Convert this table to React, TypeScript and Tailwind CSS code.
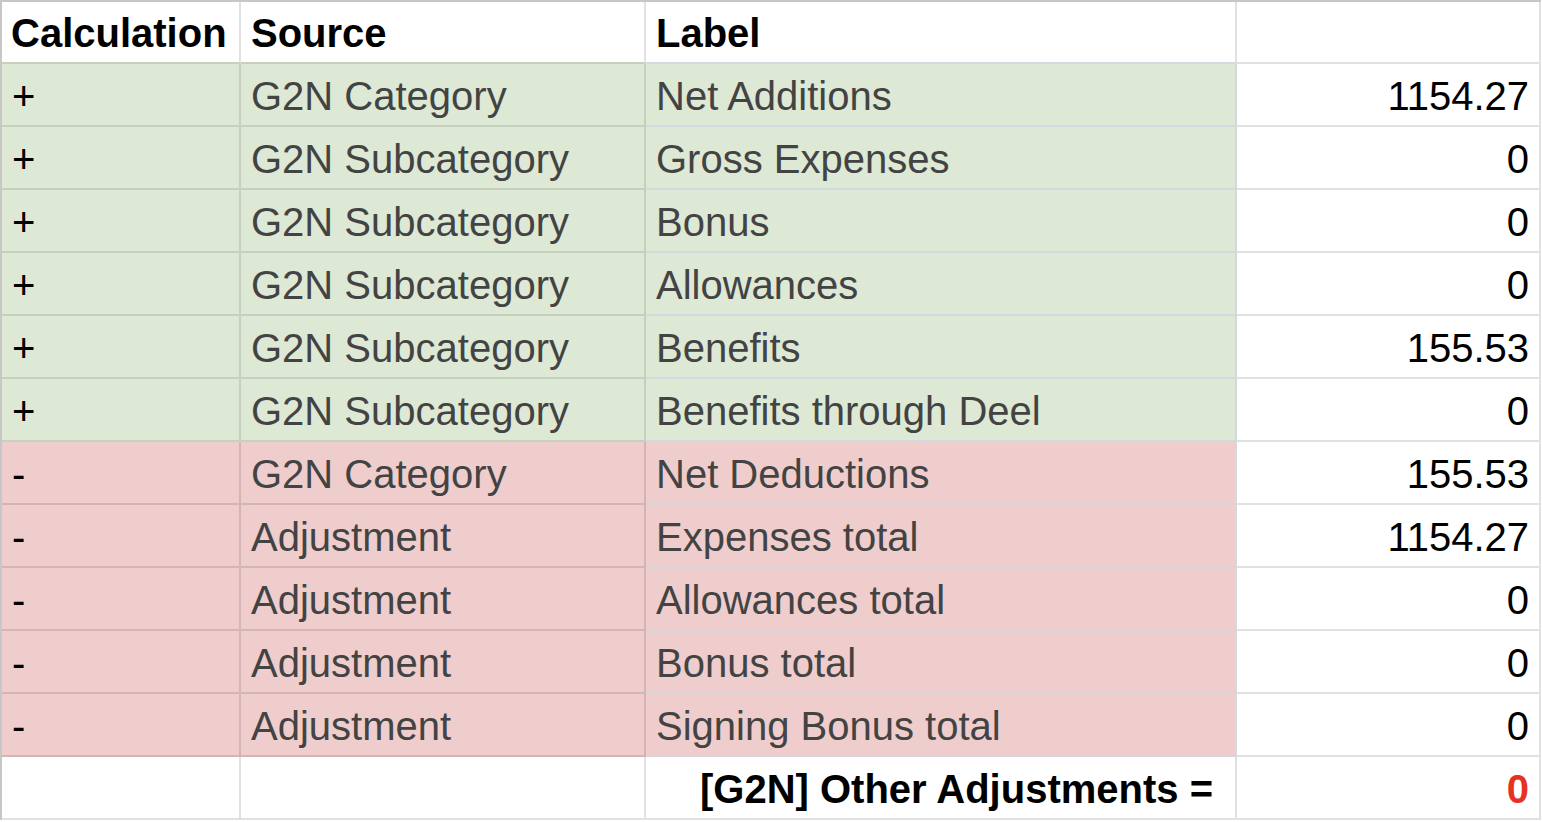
import React from "react";

type Row = { calc: string; source: string; label: string; value: string; kind: "g" | "r" };

const rows: Row[] = [
  { calc: "+", source: "G2N Category", label: "Net Additions", value: "1154.27", kind: "g" },
  { calc: "+", source: "G2N Subcategory", label: "Gross Expenses", value: "0", kind: "g" },
  { calc: "+", source: "G2N Subcategory", label: "Bonus", value: "0", kind: "g" },
  { calc: "+", source: "G2N Subcategory", label: "Allowances", value: "0", kind: "g" },
  { calc: "+", source: "G2N Subcategory", label: "Benefits", value: "155.53", kind: "g" },
  { calc: "+", source: "G2N Subcategory", label: "Benefits through Deel", value: "0", kind: "g" },
  { calc: "-", source: "G2N Category", label: "Net Deductions", value: "155.53", kind: "r" },
  { calc: "-", source: "Adjustment", label: "Expenses total", value: "1154.27", kind: "r" },
  { calc: "-", source: "Adjustment", label: "Allowances total", value: "0", kind: "r" },
  { calc: "-", source: "Adjustment", label: "Bonus total", value: "0", kind: "r" },
  { calc: "-", source: "Adjustment", label: "Signing Bonus total", value: "0", kind: "r" },
];

const base =
  "flex items-center border-r-2 border-b-2 text-[40px] leading-none whitespace-nowrap overflow-hidden";

export default function App() {
  return (
    <div
      className="w-[1542px] h-[822px] bg-white"
      style={{ fontFamily: '"Liberation Sans", Arial, sans-serif' }}
    >
      <div className="grid grid-cols-[239px_405px_591px_304px] border-l-2 border-t-2 border-[#c7c7c7] w-[1541px]">
        {/* header */}
        <div className={`${base} h-[62px] pt-[2px] pl-[9px] font-bold text-black bg-white border-[#e1e1e1] border-b-[#c6d0be]`}>
          Calculation
        </div>
        <div className={`${base} h-[62px] pt-[2px] pl-[10px] font-bold text-black bg-white border-[#e1e1e1] border-b-[#c6d0be]`}>
          Source
        </div>
        <div className={`${base} h-[62px] pt-[2px] pl-[10px] font-bold text-black bg-white border-[#e1e1e1] border-b-[#d3dae0]`}>
          Label
        </div>
        <div className={`${base} h-[62px] bg-white border-[#e1e1e1]`}></div>

        {rows.map((r, i) => {
          const g = r.kind === "g";
          const bg = g ? "bg-[#dde8d5]" : "bg-[#eecdcc]";
          const b12 = g ? "border-[#c6d0be]" : "border-[#d5b5b4]";
          const b3 = g ? "border-r-[#d2d9df] border-b-[#d2d9df]" : "border-r-[#d2d9df] border-b-[#d7d5d8]";
          return (
            <React.Fragment key={i}>
              <div className={`${base} h-[63px] pt-[3px] pl-[10px] text-black ${bg} ${b12}`}>{r.calc}</div>
              <div className={`${base} h-[63px] pt-[3px] pl-[10px] text-[#434343] ${bg} ${b12}`}>{r.source}</div>
              <div className={`${base} h-[63px] pt-[3px] pl-[10px] text-[#434343] ${bg} ${b3}`}>{r.label}</div>
              <div className={`${base} h-[63px] pt-[3px] justify-end pr-[10px] text-black bg-white border-[#e1e1e1]`}>
                {r.value}
              </div>
            </React.Fragment>
          );
        })}

        {/* total row */}
        <div className={`${base} h-[63px] bg-white border-[#e1e1e1]`}></div>
        <div className={`${base} h-[63px] bg-white border-[#e1e1e1]`}></div>
        <div className={`${base} h-[63px] pt-[3px] justify-end pr-[22px] font-bold text-black bg-white border-[#e1e1e1]`}>
          [G2N] Other Adjustments =
        </div>
        <div className={`${base} h-[63px] pt-[3px] justify-end pr-[10px] font-bold text-[#e8321f] bg-white border-[#e1e1e1]`}>
          0
        </div>
      </div>
    </div>
  );
}
